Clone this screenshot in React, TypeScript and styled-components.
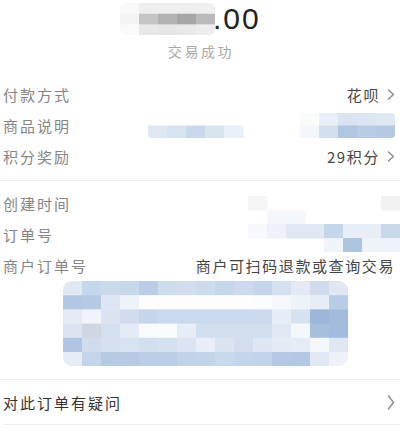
import React from 'react'
import styled, { createGlobalStyle } from 'styled-components'

const GlobalStyle = createGlobalStyle`
  html, body {
    margin: 0;
    padding: 0;
    background: #ffffff;
  }
  body {
    font-family: "Noto Sans CJK SC", "Noto Sans", sans-serif;
  }
`

const Page = styled.div`
  width: 400px;
  height: 435px;
  overflow: hidden;
  background: #ffffff;
  color: #333333;
`

const Header = styled.div`
  height: 79px;
  display: flex;
  flex-direction: column;
`

const AmountRow = styled.div`
  display: flex;
  align-items: flex-end;
  padding: 3px 0 0 120px;
  height: 32px;
`

const AmountTail = styled.span`
  font-family: "Liberation Sans", "Noto Sans", sans-serif;
  font-size: 30px;
  line-height: 30px;
  letter-spacing: 2px;
  color: #222222;
  margin-left: -2px;
  margin-bottom: 1px;
`

const Status = styled.div`
  margin-top: 7px;
  text-align: center;
  font-size: 14px;
  line-height: 18px;
  letter-spacing: 2.6px;
  color: #a8a8a8;
  padding-left: 2px;
`

const Section = styled.div`
  position: relative;
`

const Row = styled.div<{ $h?: number }>`
  height: ${(p) => p.$h ?? 31}px;
  display: flex;
  align-items: center;
  justify-content: space-between;
  padding: 0 5px 0 3px;
`

const Label = styled.span<{ $dark?: boolean }>`
  font-size: 15px;
  letter-spacing: 2px;
  color: ${(p) => (p.$dark ? '#333333' : '#858585')};
  white-space: nowrap;
`

const Value = styled.span`
  display: flex;
  align-items: center;
  gap: 7px;
  font-size: 15px;
  letter-spacing: 1.6px;
  color: #444444;
  white-space: nowrap;
`

const Divider = styled.div<{ $top: number; $bottom: number; $left?: number }>`
  height: 1px;
  background: #efefef;
  margin: ${(p) => `${p.$top}px 0 ${p.$bottom}px ${p.$left ?? 0}px`};
`

const CodeBox = styled.div`
  padding: 0 0 0 63px;
  height: 85px;
`

const Mask = styled.div`
  position: absolute;
  right: 0;
  top: 8px;
`

const Chevron = ({ h = 11 }: { h?: number }) => (
  <svg width="8" height={h} viewBox={`0 0 8 ${h}`}>
    <polyline
      points={`1.5,1 6.5,${h / 2} 1.5,${h - 1}`}
      fill="none"
      stroke="#8c8c8c"
      strokeWidth="1.4"
      strokeLinecap="round"
      strokeLinejoin="round"
    />
  </svg>
)

type MosaicProps = {
  cells: string[][]
  cw: number
  ch: number
  r?: number
}

const Mosaic = ({ cells, cw, ch, r = 0 }: MosaicProps) => {
  const w = cells[0].length * cw
  const h = cells.length * ch
  const id = `clip-${w}-${h}-${r}`
  return (
    <svg width={w} height={h} viewBox={`0 0 ${w} ${h}`} style={{ display: 'block' }}>
      <defs>
        <clipPath id={id}>
          <rect x="0" y="0" width={w} height={h} rx={r} />
        </clipPath>
      </defs>
      <g clipPath={`url(#${id})`}>
        {cells.map((row, y) =>
          row.map((c, x) =>
            c ? <rect key={`${x}-${y}`} x={x * cw} y={y * ch} width={cw + 0.5} height={ch + 0.5} fill={c} /> : null,
          ),
        )}
      </g>
    </svg>
  )
}

const amountCells = [
  ['#f8f8f8', '#eeeeee', '#eeeeee', '#eeeeee', '#efefef'],
  ['#f4f4f4', '#c5c5c5', '#b3b3b3', '#a6a6a6', '#bababa'],
  ['#fafafa', '#e8e8e8', '#e6e6e6', '#e9e9e9', '#ededed'],
]

const goodsCells = [
  ['', '', '', '', '', '', '', '', '#fafbfd', '#e9eff7', '#d9e3f1', '#dce6f2', '#e0e8f3'],
  ['#dfe7f2', '#d8e3f1', '#c9d8ec', '#d9e4f1', '#eaf0f7', '', '', '', '#f3f6fa', '#d3dfee', '#b0c6e2', '#b8cce5', '#b5c9e4'],
]

const orderCells = [
  ['#f5f5f5', '', '', '', '', '', '', '#f2f2f2'],
  ['', '#f3f6fa', '#f3f6fa', '', '', '', '', ''],
  ['#f6f8fb', '#eef2f8', '#e0e8f3', '#e0e8f3', '#c5d5ea', '#e8eef6', '#e8eef6', '#c8d7ea'],
  ['', '', '', '', '#f0f4f9', '#aec5e2', '#eef3f9', '#eef3f9'],
]

const codeCells = [
  ['#dfe8f3', '#c5d5eb', '#cad9ec', '#c8d8ec', '#b9cde7', '#cfdcee', '#d2def0', '#cddbee', '#c6d6eb', '#cddaed', '#c4d4ea', '#d5e0f0', '#e3eaf5', '#d0dcee', '#dfe7f2'],
  ['#b2c7e2', '#b5c9e3', '#dde6f2', '#eef3f9', '#fdfdfe', '#fdfdfe', '#fdfdfe', '#fdfdfe', '#fdfdfe', '#fdfdfe', '#fbfcfd', '#f6f8fb', '#eef3f9', '#e6edf6', '#b9cce5'],
  ['#e4ebf5', '#f0f4f9', '#dae4f1', '#d1ddee', '#c6d5ea', '#cbd9ec', '#cbd9ec', '#cbd9ec', '#cbd9ec', '#cbd9ec', '#cbd9ec', '#e6edf6', '#d7e2f0', '#9db7da', '#a3bcdc'],
  ['#dbe4f0', '#cfd7e2', '#d5e0ef', '#e3ebf5', '#f8fafc', '#f8fafc', '#e6edf6', '#d2dfef', '#d2dfef', '#d2dfef', '#d2dfef', '#dfe8f3', '#f4f7fb', '#a6bfdd', '#a3bbdc'],
  ['#afc5e2', '#d0dcee', '#d6e1f0', '#d8e2f0', '#d3dfee', '#d6e1f0', '#dbe5f1', '#e8eef7', '#dae4f1', '#d2deee', '#dde6f2', '#e4ebf5', '#e5ecf5', '#f5f8fb', '#dfe7f2'],
  ['#e7edf6', '#c4d4ea', '#b6cae4', '#b6cae4', '#bccee6', '#bbcee6', '#c2d3e9', '#c3d3e9', '#cad8ec', '#c4d4ea', '#c3d3e9', '#b5c9e4', '#b3c8e3', '#e0e8f3', '#eef2f8'],
]

const App = () => (
  <>
    <GlobalStyle />
    <Page>
      <Header>
        <AmountRow>
          <Mosaic cells={amountCells} cw={19} ch={10.7} r={6} />
          <AmountTail>.00</AmountTail>
        </AmountRow>
        <Status>交易成功</Status>
      </Header>

      <Section>
        <Row>
          <Label>付款方式</Label>
          <Value>
            花呗
            <Chevron />
          </Value>
        </Row>
        <Row>
          <Label>商品说明</Label>
          <Mosaic cells={goodsCells} cw={19} ch={12.5} r={4} />
        </Row>
        <Row>
          <Label>积分奖励</Label>
          <Value>
            29积分
            <Chevron />
          </Value>
        </Row>
      </Section>

      <Divider $top={8} $bottom={7} />

      <Section>
        <Mask>
          <Mosaic cells={orderCells} cw={19} ch={14} />
        </Mask>
        <Row>
          <Label>创建时间</Label>
        </Row>
        <Row>
          <Label>订单号</Label>
        </Row>
        <Row>
          <Label>商户订单号</Label>
          <Value>商户可扫码退款或查询交易</Value>
        </Row>
      </Section>

      <CodeBox>
        <Mosaic cells={codeCells} cw={19} ch={14.2} r={9} />
      </CodeBox>

      <Divider $top={13} $bottom={7} />

      <Row $h={30}>
        <Label $dark>对此订单有疑问</Label>
        <Chevron h={15} />
      </Row>

      <Divider $top={7} $bottom={0} $left={3} />
    </Page>
  </>
)

export default App
